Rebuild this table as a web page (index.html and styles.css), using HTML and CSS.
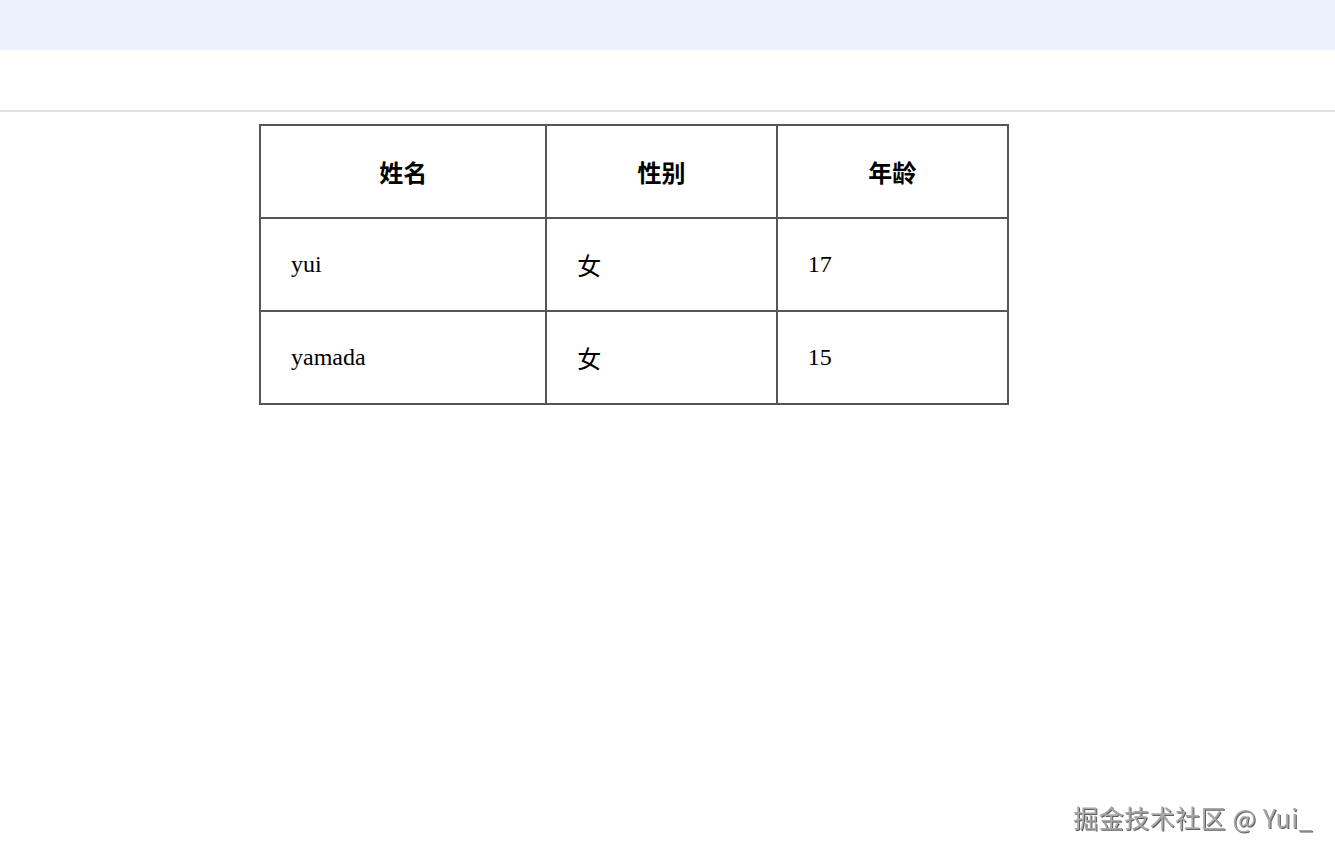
FILE: index.html
```html
<!DOCTYPE html>
<html lang="zh-CN">
<head>
<meta charset="utf-8">
<title>表格</title>
<link rel="stylesheet" href="styles.css">
</head>
<body>
<div class="topbar"></div>
<div class="toolbar"></div>
<main class="content">
  <table class="data-table">
    <colgroup>
      <col class="c1">
      <col class="c2">
      <col class="c3">
    </colgroup>
    <thead>
      <tr><th>姓名</th><th>性别</th><th>年龄</th></tr>
    </thead>
    <tbody>
      <tr><td>yui</td><td>女</td><td>17</td></tr>
      <tr><td>yamada</td><td>女</td><td>15</td></tr>
    </tbody>
  </table>
</main>
<div class="watermark">掘金技术社区 @ Yui_</div>
</body>
</html>
```

FILE: styles.css
```css
html, body {
  margin: 0;
  padding: 0;
  background: #ffffff;
}
body {
  font-family: "Liberation Serif", "Noto Sans CJK SC", serif;
  color: #000;
}
.topbar {
  height: 50px;
  background: #ebf1fa;
}
.toolbar {
  height: 60px;
  border-bottom: 2px solid #e2e2e2;
}
.content {
  padding: 12px 0 0 259px;
}
.data-table {
  border-collapse: collapse;
  width: 750px;
  border: 2px solid #555;
}
.c1 { width: 287px; }
.c2 { width: 231px; }
.c3 { width: 232px; }
.data-table th,
.data-table td {
  border: 2px solid #555;
  height: 91px;
  padding: 0;
}
.data-table th {
  font-family: "Noto Sans CJK SC", sans-serif;
  font-weight: 700;
  font-size: 24px;
  text-align: center;
}
.data-table td {
  font-family: "Liberation Serif", "Noto Sans CJK SC", serif;
  font-size: 24px;
  text-align: left;
  padding-left: 30px;
}
.watermark {
  position: fixed;
  right: 22px;
  bottom: 20px;
  font-family: "Noto Sans CJK SC", sans-serif;
  font-size: 25px;
  color: #a8a8a8;
  text-shadow: 1px 1px 0 #606060, -1px -1px 0 #ffffff;
  letter-spacing: 0.5px;
}
```
